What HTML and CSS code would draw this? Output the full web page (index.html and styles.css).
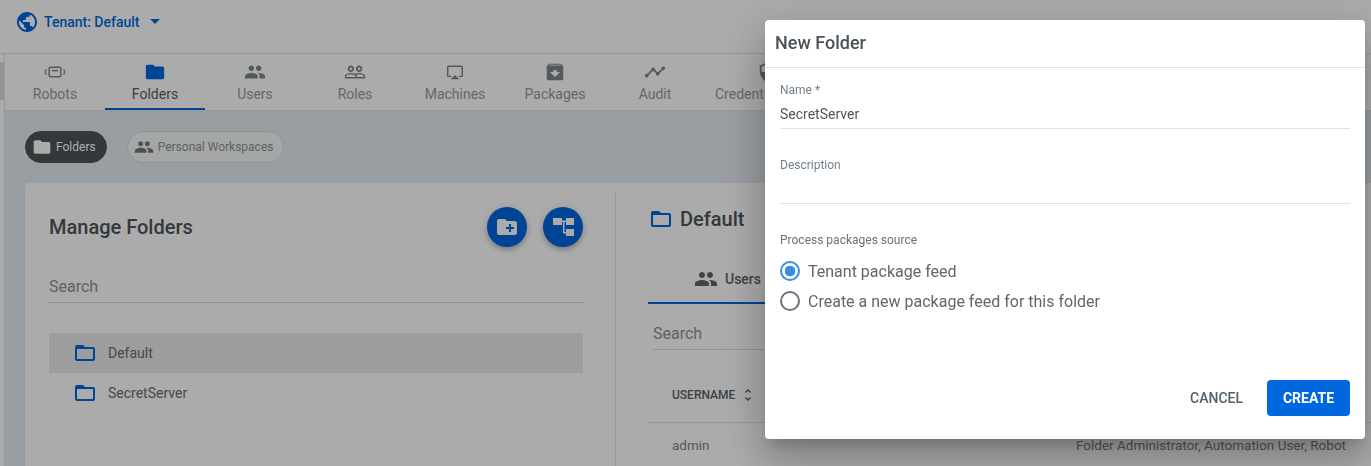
FILE: index.html
```html
<!DOCTYPE html>
<html lang="en">
<head>
<meta charset="utf-8">
<title>New Folder</title>
<link rel="stylesheet" href="styles.css">
</head>
<body>
<svg class="defs" width="0" height="0" aria-hidden="true">
  <symbol id="i-globe" viewBox="2 2 20 20"><path d="M12 2C6.48 2 2 6.48 2 12s4.48 10 10 10 10-4.48 10-10S17.52 2 12 2zm-1 17.93c-3.95-.49-7-3.85-7-7.93 0-.62.08-1.21.21-1.79L9 15v1c0 1.1.9 2 2 2v1.93zm6.9-2.54c-.26-.81-1-1.39-1.9-1.39h-1v-3c0-.55-.45-1-1-1H8v-2h2c.55 0 1-.45 1-1V7h2c1.1 0 2-.9 2-2v-.41c2.93 1.19 5 4.06 5 7.41 0 2.08-.8 3.97-2.1 5.39z"/></symbol>
  <symbol id="i-folder" viewBox="0 0 24 24"><path d="M10 4H4c-1.1 0-1.99.9-1.99 2L2 18c0 1.1.9 2 2 2h16c1.1 0 2-.9 2-2V8c0-1.1-.9-2-2-2h-8l-2-2z"/></symbol>
  <symbol id="i-folder-o" viewBox="0 0 24 24"><path d="M20 6h-8l-2-2H4c-1.1 0-1.99.9-1.99 2L2 18c0 1.1.9 2 2 2h16c1.1 0 2-.9 2-2V8c0-1.1-.9-2-2-2zm0 12H4V8h16v10z"/></symbol>
  <symbol id="i-people" viewBox="0 0 24 24"><path d="M16 11c1.66 0 2.99-1.34 2.99-3S17.66 5 16 5c-1.66 0-3 1.34-3 3s1.34 3 3 3zm-8 0c1.66 0 2.99-1.34 2.99-3S9.66 5 8 5C6.34 5 5 6.34 5 8s1.34 3 3 3zm0 2c-2.33 0-7 1.17-7 3.5V19h14v-2.5c0-2.33-4.67-3.5-7-3.5zm8 0c-.29 0-.62.02-.97.05 1.16.84 1.97 1.97 1.97 3.45V19h6v-2.5c0-2.33-4.67-3.5-7-3.5z"/></symbol>
  <symbol id="i-people-o" viewBox="0 0 24 24"><path d="M16.5 13c-1.2 0-3.07.34-4.5 1-1.43-.67-3.3-1-4.5-1C5.33 13 1 14.08 1 16.25V19h22v-2.75c0-2.17-4.33-3.25-6.5-3.25zm-4 4.5h-10v-1.25c0-.54 2.56-1.75 5-1.75s5 1.21 5 1.75v1.25zm9 0H14v-1.25c0-.46-.2-.86-.52-1.22.88-.3 1.96-.53 3.02-.53 2.44 0 5 1.21 5 1.75v1.25zM7.5 12c1.93 0 3.5-1.57 3.5-3.5S9.43 5 7.5 5 4 6.57 4 8.5 5.57 12 7.5 12zm0-5c.83 0 1.5.67 1.5 1.5S8.33 10 7.500 10 6 9.33 6 8.500 6.670 7 7.500 7zm9 5c1.930 0 3.500-1.570 3.500-3.500S18.430 5 16.500 5 13 6.570 13 8.500s1.570 3.500 3.500 3.500zm0-5c.830 0 1.500.670 1.500 1.500S17.330 10 16.500 10 15 9.330 15 8.500 15.670 7 16.500 7z"/></symbol>
  <symbol id="i-airplay" viewBox="-3.100 -3.100 30.200 30.200"><path d="M6 22h12l-6-6zM21 3H3c-1.100 0-2 .900-2 2v12c0 1.100.900 2 2 2h4v-2H3V5h18v12h-4v2h4c1.100 0 2-.900 2-2V5c0-1.100-.900-2-2-2z"/></symbol>
  <symbol id="i-archive" viewBox="0 0 24 24"><path d="M20.540 5.230l-1.390-1.680C18.880 3.210 18.470 3 18 3H6c-.470 0-.880.210-1.160.550L3.460 5.230C3.170 5.570 3 6.020 3 6.500V19c0 1.100.900 2 2 2h14c1.100 0 2-.900 2-2V6.500c0-.480-.170-.930-.460-1.270zM12 17.500L6.500 12H10v-2h4v2h3.500L12 17.500zM5.120 5l.810-1h12l.940 1H5.120z"/></symbol>
  <symbol id="i-timeline" viewBox="0 0 24 24"><path d="M23 8c0 1.100-.900 2-2 2-.180 0-.350-.020-.510-.070l-3.560 3.550c.050.160.070.340.070.520 0 1.100-.900 2-2 2s-2-.900-2-2c0-.180.020-.360.070-.520l-2.550-2.550c-.160.050-.340.070-.520.070s-.360-.020-.520-.070l-4.550 4.560c.050.160.070.330.070.510 0 1.100-.900 2-2 2s-2-.900-2-2 .900-2 2-2c.180 0 .350.020.510.070l4.560-4.550C8.020 9.360 8 9.180 8 9c0-1.100.900-2 2-2s2 .900 2 2c0 .180-.020.360-.070.520l2.550 2.550c.160-.050.340-.070.520-.070s.360.020.520.070l3.550-3.560C19.020 8.350 19 8.180 19 8c0-1.100.900-2 2-2s2 .900 2 2z"/></symbol>
  <symbol id="i-shield" viewBox="0 0 24 24"><path d="M12 1L3 5v6c0 5.550 3.840 10.740 9 12 5.160-1.260 9-6.450 9-12V5l-9-4zm0 10.990h7c-.530 4.120-3.280 7.790-7 8.940V12H5V6.300l7-3.110v8.800z"/></symbol>
  <symbol id="i-new-folder" viewBox="0 0 24 24"><path d="M20 6h-8l-2-2H4c-1.110 0-1.990.890-1.990 2L2 18c0 1.110.890 2 2 2h16c1.110 0 2-.890 2-2V8c0-1.110-.890-2-2-2zm-1 8h-3v3h-2v-3h-3v-2h3V9h2v3h3v2z"/></symbol>
  <symbol id="i-tree" viewBox="0 0 24 24"><path d="M2 3h9v7H2zM15 3h8v7h-8zM15 14h8v7h-8zM11 5.500h4V7h-1.500v10H15v1.500h-3V7h-1z"/></symbol>
  <symbol id="i-robot" viewBox="0 0 24 24"><g fill="none" stroke="currentColor"><rect x="5.600" y="6.800" width="12.800" height="10.400" rx="1.500" stroke-width="1.600"/><path d="M8.500 10.500h7" stroke-width="1.600"/><path d="M2.600 9L1.200 12l1.400 3M21.400 9l1.400 3-1.400 3" stroke-width="1.300"/></g></symbol>
  <symbol id="i-unfold" viewBox="0 0 24 24"><path d="M12 5.830L15.170 9l1.410-1.410L12 3 7.410 7.590 8.830 9 12 5.830zm0 12.340L8.830 15l-1.410 1.410L12 21l4.590-4.590L15.170 15 12 18.170z"/></symbol>
  <symbol id="i-caret" viewBox="0 0 10 5"><path d="M0 0h10L5 5z"/></symbol>
</svg>

<header class="topbar">
  <svg class="ic globe"><use href="#i-globe"/></svg>
  <span class="tenant">Tenant: Default</span>
  <svg class="ic caret"><use href="#i-caret"/></svg>
</header>

<div class="shell">
  <div class="rail"><div class="rail-thumb"></div></div>
  <main class="content">
    <nav class="tabs">
      <a class="tab"><svg class="ic tab-ic"><use href="#i-robot"/></svg><span>Robots</span></a>
      <a class="tab active"><svg class="ic tab-ic"><use href="#i-folder"/></svg><span>Folders</span></a>
      <a class="tab"><svg class="ic tab-ic"><use href="#i-people"/></svg><span>Users</span></a>
      <a class="tab"><svg class="ic tab-ic"><use href="#i-people-o"/></svg><span>Roles</span></a>
      <a class="tab"><svg class="ic tab-ic"><use href="#i-airplay"/></svg><span>Machines</span></a>
      <a class="tab"><svg class="ic tab-ic"><use href="#i-archive"/></svg><span>Packages</span></a>
      <a class="tab"><svg class="ic tab-ic"><use href="#i-timeline"/></svg><span>Audit</span></a>
      <a class="tab"><svg class="ic tab-ic"><use href="#i-shield"/></svg><span>Credential Stores</span></a>
    </nav>

    <section class="page">
      <div class="chips">
        <span class="chip chip-on"><svg class="ic chip-ic"><use href="#i-folder"/></svg>Folders</span>
        <span class="chip"><svg class="ic chip-ic"><use href="#i-people"/></svg>Personal Workspaces</span>
      </div>

      <div class="card">
        <div class="pane-left">
          <div class="pane-head">
            <h2 class="pane-title">Manage Folders</h2>
            <div class="fabs">
              <button class="fab"><svg class="ic fab-ic"><use href="#i-new-folder"/></svg></button>
              <button class="fab"><svg class="ic fab-ic"><use href="#i-tree"/></svg></button>
            </div>
          </div>
          <div class="search search-left">Search</div>
          <ul class="tree">
            <li class="tree-row selected"><svg class="ic tree-ic"><use href="#i-folder-o"/></svg>Default</li>
            <li class="tree-row"><svg class="ic tree-ic"><use href="#i-folder-o"/></svg>SecretServer</li>
          </ul>
        </div>
        <div class="pane-right">
          <h2 class="detail-title"><svg class="ic detail-ic"><use href="#i-folder-o"/></svg>Default</h2>
          <div class="subtabs">
            <span class="subtab"><svg class="ic subtab-ic"><use href="#i-people"/></svg>Users</span>
          </div>
          <div class="search search-right">Search</div>
          <div class="table">
            <div class="thead"><span class="th">USERNAME<svg class="ic sort-ic"><use href="#i-unfold"/></svg></span></div>
            <div class="trow"><span>admin</span><span>Folder Administrator, Automation User, Robot</span></div>
          </div>
        </div>
      </div>
    </section>
  </main>
</div>

<div class="backdrop"></div>

<div class="dialog" role="dialog">
  <h1 class="dialog-title">New Folder</h1>
  <div class="dialog-body">
    <div class="field field-name">
      <label class="field-label">Name *</label>
      <div class="field-value">SecretServer</div>
    </div>
    <div class="field field-desc">
      <label class="field-label">Description</label>
      <div class="field-value"></div>
    </div>
    <div class="group-label">Process packages source</div>
    <div class="radio"><span class="radio-dot on"></span>Tenant package feed</div>
    <div class="radio"><span class="radio-dot"></span>Create a new package feed for this folder</div>
  </div>
  <div class="dialog-actions">
    <button class="btn-text">CANCEL</button>
    <button class="btn-primary">CREATE</button>
  </div>
</div>
</body>
</html>
```
FILE: styles.css
```css
* { box-sizing: border-box; }
html, body { margin: 0; height: 466px; overflow: hidden; }
body { font-family: Roboto, "Liberation Sans", sans-serif; background: #fff; color: #4d555b; display: flex; flex-direction: column; }
.defs { display: block; height: 0; }
.ic { display: block; fill: currentColor; flex: none; }

.topbar { height: 54px; flex: none; display: flex; align-items: center; padding: 0 0 10px 17px; border-bottom: 1px solid #e3e3e3; background: #fff; }
.globe { width: 20px; height: 20px; color: #0067df; }
.tenant { margin-left: 7px; font-size: 14px; font-weight: 500; color: #0067df; }
.caret { width: 10px; height: 5px; margin-left: 10px; color: #0067df; }

.shell { flex: 1; display: flex; min-height: 0; overflow: hidden; }
.rail { width: 5px; flex: none; border-right: 1px solid #dfe3e6; padding-top: 8px; background: #fff; }
.rail-thumb { height: 38px; width: 4px; background: #d9dcde; }
.content { flex: 1; min-width: 0; background: #e5ecf2; display: flex; flex-direction: column; }

.tabs { height: 57px; flex: none; display: flex; background: #fff; border-bottom: 1px solid #e3e3e3; }
.tab { min-width: 100px; height: 56px; padding: 7px 10px 0; flex: none; display: flex; flex-direction: column; align-items: center; font-size: 14px; color: #939ba1; }
.tab span { margin-top: 1px; line-height: 20px; }
.tab-ic { width: 22px; height: 22px; color: #7d868c; }
.tab.active { color: #5a6066; border-bottom: 2px solid #0067df; }
.tab.active .tab-ic { color: #0067df; }

.page { flex: 1; min-height: 0; display: flex; flex-direction: column; padding: 20px 0 0 20px; }
.chips { display: flex; gap: 20px; height: 32px; flex: none; }
.chip { height: 32px; padding: 0 10px 0 6px; display: flex; align-items: center; border-radius: 16px; border: 1px solid #d9dde0; background: #f7f8f8; font-size: 12px; color: #8a9298; }
.chip-ic { width: 20px; height: 20px; margin-right: 4px; color: #74797e; }
.chip-on { background: #4d5459; border-color: #4d5459; color: #fff; }
.chip-on .chip-ic { color: #fff; }

.card { margin-top: 20px; flex: 1; min-height: 0; overflow: hidden; background: #fff; border-radius: 4px 0 0 0; display: flex; padding-top: 8px; }
.pane-left { width: 591px; flex: none; padding: 16px 32px 0 24px; border-right: 1px solid #dfe3e6; }
.pane-head { display: flex; justify-content: space-between; align-items: center; height: 40px; }
.pane-title { margin: 0; font-size: 20px; font-weight: 500; color: #4d555b; line-height: 40px; }
.fabs { display: flex; gap: 16px; }
.fab { width: 40px; height: 40px; border: 0; border-radius: 50%; padding: 0; background: #0067df; color: #fff; display: flex; align-items: center; justify-content: center; box-shadow: 0 3px 5px rgba(0,0,0,.2), 0 1px 8px rgba(0,0,0,.12); }
.fab-ic { width: 24px; height: 24px; }

.search { font-size: 16px; color: #8a9298; line-height: 24px; border-bottom: 1px solid #d6dadc; }
.search-left { margin-top: 28px; height: 28px; }
.tree { list-style: none; margin: 30px 0 0; padding: 0; }
.tree-row { height: 40px; display: flex; align-items: center; padding: 0 0 1px 24px; font-size: 14px; color: #676d72; }
.tree-row.selected { background: #ebebeb; }
.tree-ic { width: 24px; height: 24px; margin-right: 11px; color: #0067df; }

.pane-right { flex: 1; min-width: 0; padding: 8px 0 0 32px; }
.detail-title { margin: 0; height: 40px; display: flex; align-items: center; font-size: 20px; font-weight: 500; color: #4d555b; }
.detail-ic { width: 24px; height: 24px; margin: 0 7px 0 1px; color: #0067df; }
.subtabs { display: flex; margin-top: 16px; height: 49px; }
.subtab { width: 117px; height: 49px; padding-left: 46px; display: flex; align-items: center; font-size: 14px; font-weight: 500; color: #5d6468; border-bottom: 2px solid #0067df; }
.subtab-ic { width: 24px; height: 24px; margin-right: 7px; }
.search-right { margin: 18px 0 0 5px; height: 28px; width: 400px; }
.table { margin-top: 17px; background: #fff; border-radius: 4px 0 0 0; box-shadow: 0 0 1px #cfd8dd; }
.thead { height: 56px; display: flex; align-items: center; padding-left: 24px; border-bottom: 1px solid #dfe3e6; }
.th { display: flex; align-items: center; font-size: 12px; font-weight: 500; color: #5a6166; }
.sort-ic { width: 16px; height: 16px; margin-left: 5px; }
.trow { display: flex; justify-content: space-between; height: 44px; align-items: center; padding: 0 25px 0 24px; font-size: 13.5px; color: #7a8288; }

.backdrop { position: fixed; inset: 0; background: rgba(0,0,0,.33); }

.dialog { position: fixed; left: 765px; top: 20px; width: 600px; height: 419px; background: #fff; border-radius: 4px; box-shadow: 0 11px 15px -7px rgba(0,0,0,.2), 0 24px 38px 3px rgba(0,0,0,.14), 0 9px 46px 8px rgba(0,0,0,.12); display: flex; flex-direction: column; }
.dialog-title { margin: 0; height: 48px; flex: none; padding: 0 0 2px 10px; display: flex; align-items: center; font-size: 18px; font-weight: 500; color: #4a5157; border-bottom: 1px solid #dfe3e6; }
.dialog-body { flex: 1; padding: 15px 15px 0; }
.field { display: flex; flex-direction: column; border-bottom: 1px solid #dfe3e6; }
.field-name { height: 46px; }
.field-desc { height: 46px; margin-top: 29px; }
.field-label { font-size: 12px; line-height: 14px; color: #737f8a; }
.field-value { font-size: 14px; line-height: 20px; margin-top: 7px; color: #4f5860; }
.group-label { margin-top: 28px; font-size: 12px; line-height: 16px; color: #68737d; }
.radio { height: 30px; display: flex; align-items: center; font-size: 16px; color: #5f676d; }
.group-label + .radio { margin-top: 8px; }
.radio-dot { width: 20px; height: 20px; margin-right: 8px; border: 2px solid #68737d; border-radius: 50%; flex: none; }
.radio-dot.on { border-color: #3a8de8; background: radial-gradient(circle, #3a8de8 0 5px, #fff 5.6px); }
.dialog-actions { flex: none; height: 59px; padding: 0 15px 23px; display: flex; justify-content: flex-end; align-items: center; gap: 24px; }
.btn-text, .btn-primary { font: 500 14px Roboto, "Liberation Sans", sans-serif; border: 0; background: none; padding: 0; }
.btn-text { color: #526069; }
.btn-primary { width: 83px; height: 36px; border-radius: 4px; background: #0067df; color: #fff; font-weight: 700; }
```
